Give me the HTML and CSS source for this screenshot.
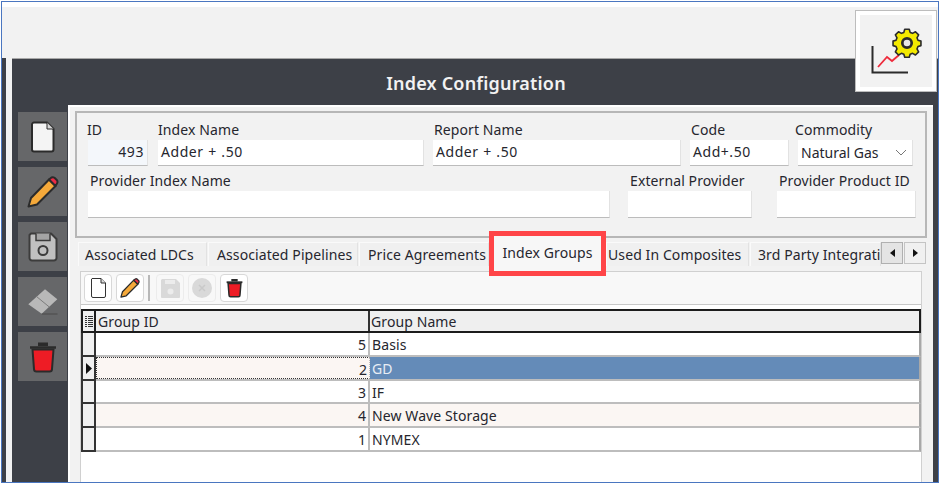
FILE: index.html
```html
<!DOCTYPE html>
<html lang="en">
<head>
<meta charset="utf-8">
<title>Index Configuration</title>
<link rel="stylesheet" href="styles.css">
</head>
<body>
<div class="window">
  <div class="topbar"></div>
  <div class="logo-tile">
    <svg width="60" height="52" viewBox="865 25 60 52">
      <path d="M872.500 46V72.500H908" fill="none" stroke="#2b2b2b" stroke-width="2"/>
      <path d="M878 67L887 57L892 61L899 55" fill="none" stroke="#ee2b3c" stroke-width="1.800"/>
      <g transform="translate(907 43) scale(.9) translate(-44.500 -16.800)">
        <path d="M42 1.500h5l1 3.500 2.700 1.100 3.200-1.800 3.500 3.500-1.800 3.200 1.100 2.700 3.300 1v5l-3.300 1-1.100 2.700 1.800 3.200-3.500 3.500-3.200-1.800-2.700 1.100-1 3.300h-5l-1-3.300-2.700-1.100-3.200 1.800-3.500-3.500 1.800-3.200-1.100-2.700-3.300-1v-5l3.300-1 1.100-2.700-1.800-3.200 3.500-3.500 3.200 1.800 2.700-1.100z" fill="#f4ea00" stroke="#2b2b2b" stroke-width="1.800" stroke-linejoin="round"/>
        <circle cx="44.500" cy="16.800" r="5.200" fill="#e8e8e8" stroke="#2b2b2b" stroke-width="3"/>
      </g>
    </svg>
  </div>
  <div class="main">
    <div class="sliver"></div>
    <div class="panel">
      <h1 class="title">Index Configuration</h1>
      <div class="body">
        <nav class="sidebar">
          <div class="side-btn">
            <svg width="24" height="32" viewBox="0 0 24 32"><path d="M3 1.500H16L22.500 8V28.500a2 2 0 0 1-2 2H3a2 2 0 0 1-2-2V3.500a2 2 0 0 1 2-2z" fill="#f4f4f4" stroke="#2b2b2b" stroke-width="2"/><path d="M16 1.500V8H22.500" fill="#d8d8d8" stroke="#2b2b2b" stroke-width="1"/></svg>
          </div>
          <div class="side-btn">
            <svg width="32" height="32" viewBox="0 0 32 32"><path d="M1.500 30.500L4 22L22 3.500L28.500 10L10 28.500z" fill="#f5a93a" stroke="#2b2b2b" stroke-width="2" stroke-linejoin="round"/><path d="M22 3.500L24.500 1.500Q26 .7 27.500 1.800L30 4.300Q31 6 30 7.500L28.500 10z" fill="#ee2b45" stroke="#2b2b2b" stroke-width="2" stroke-linejoin="round"/></svg>
          </div>
          <div class="side-btn">
            <svg width="30" height="30" viewBox="0 0 30 30"><path d="M3 1.500H23L28.500 7V26a2.500 2.500 0 0 1-2.500 2.500H4A2.500 2.500 0 0 1 1.500 26V3z" fill="#c0c0c0" stroke="#3c3c3c" stroke-width="2" stroke-linejoin="round"/><path d="M8 1.500V8.500H22V1.500" fill="#a4a4a4" stroke="#3c3c3c" stroke-width="1.500"/><circle cx="15" cy="18.500" r="4.500" fill="#c0c0c0" stroke="#3c3c3c" stroke-width="2"/></svg>
          </div>
          <div class="side-btn">
            <svg width="32" height="28" viewBox="27 287 32 28"><path d="M28.300 303.300L45 288.300L57.300 298.300L41.700 312.700z" fill="#b8b8b8"/><path d="M36.500 295.500L49.300 306" stroke="#7c7c7c" stroke-width="1"/><path d="M41.700 313H57.500" stroke="#4a4a4a" stroke-width="1"/></svg>
          </div>
          <div class="side-btn">
            <svg width="28" height="32" viewBox="0 0 28 32"><path d="M1 6.500H27" stroke="#2b2b2b" stroke-width="2.500"/><path d="M10 5V2.500H18V5" fill="#2b2b2b" stroke="#2b2b2b" stroke-width="2"/><path d="M3.500 8.500H24.500L23 28a2.500 2.500 0 0 1-2.500 2.500H7.500A2.500 2.500 0 0 1 5 28z" fill="#ee1c25" stroke="#2b2b2b" stroke-width="2"/></svg>
          </div>
        </nav>
        <section class="content">
          <div class="group">
            <div class="form-row">
              <div class="field f-id"><label class="lbl l-id">ID</label><div class="input num wide">493</div></div>
              <div class="field f-name"><label class="lbl l-name">Index Name</label><div class="input wide">Adder + .50</div></div>
              <div class="field f-report"><label class="lbl l-one">Report Name</label><div class="input wide">Adder + .50</div></div>
              <div class="field f-code"><label class="lbl l-one">Code</label><div class="input wide">Add+.50</div></div>
              <div class="field f-comm"><label class="lbl l-comm">Commodity</label><div class="input select">Natural Gas<svg width="12" height="7" viewBox="0 0 12 7"><path d="M1 1L6 6L11 1" fill="none" stroke="#777" stroke-width="1"/></svg></div></div>
            </div>
            <div class="form-row row2">
              <div class="field f-prov"><label class="lbl">Provider Index Name</label><div class="input tall"></div></div>
              <div class="field f-ext"><label class="lbl">External Provider</label><div class="input tall"></div></div>
              <div class="field f-prod"><label class="lbl">Provider Product ID</label><div class="input tall"></div></div>
            </div>
          </div>
          <div class="tabs">
            <div class="tab t1">Associated LDCs</div>
            <div class="tab t2">Associated Pipelines</div>
            <div class="tab t3">Price Agreements</div>
            <div class="tab active t4">Index Groups</div>
            <div class="tab t5">Used In Composites</div>
            <div class="tab t6">3rd Party Integrations</div>
            <div class="scroller">
              <div class="arrow pressed"><svg width="5" height="8" viewBox="0 0 5 8"><path d="M5 0V8L0 4z" fill="#111"/></svg></div>
              <div class="arrow"><svg width="5" height="8" viewBox="0 0 5 8"><path d="M0 0V8L5 4z" fill="#111"/></svg></div>
            </div>
          </div>
          <div class="tab-page">
            <div class="toolbar">
              <div class="tool">
                <svg width="15" height="20" viewBox="0 0 15 20"><path d="M1 .500H10L14.500 5V18a1.500 1.500 0 0 1-1.500 1.500H2A1.500 1.500 0 0 1 .500 18V1z" fill="#fff" stroke="#333"/><path d="M10 .500V5H14.500" fill="#ddd" stroke="#333"/></svg>
              </div>
              <div class="tool">
                <svg width="20" height="20" viewBox="0 0 32 32"><path d="M1.500 30.500L4 22L22 3.500L28.500 10L10 28.500z" fill="#f5a93a" stroke="#2b2b2b" stroke-width="2" stroke-linejoin="round"/><path d="M22 3.500L24.500 1.500Q26 .7 27.500 1.800L30 4.300Q31 6 30 7.500L28.500 10z" fill="#ee2b45" stroke="#2b2b2b" stroke-width="2" stroke-linejoin="round"/></svg>
              </div>
              <div class="tool-sep"></div>
              <div class="tool off">
                <svg width="19" height="19" viewBox="0 0 19 19"><path d="M1 0H15L19 4V18a1 1 0 0 1-1 1H1a1 1 0 0 1-1-1V1z" fill="#d9d9d9"/><circle cx="9.500" cy="12.500" r="3" fill="#ececec"/><rect x="4" y="1" width="10" height="4" fill="#ececec"/></svg>
              </div>
              <div class="tool off">
                <svg width="20" height="20" viewBox="0 0 20 20"><circle cx="10" cy="10" r="10" fill="#d9d9d9"/><path d="M7 7L13 13M13 7L7 13" stroke="#c9c9c9" stroke-width="1.500"/></svg>
              </div>
              <div class="tool">
                <svg width="17" height="20" viewBox="0 0 28 32"><path d="M1 6.500H27" stroke="#2b2b2b" stroke-width="3"/><path d="M10 5V2.500H18V5" fill="#2b2b2b" stroke="#2b2b2b" stroke-width="2.500"/><path d="M3.500 8.500H24.500L23 28a2.500 2.500 0 0 1-2.500 2.500H7.500A2.500 2.500 0 0 1 5 28z" fill="#ee1c25" stroke="#2b2b2b" stroke-width="2.500"/></svg>
              </div>
            </div>
            <div class="grid">
              <div class="grid-row head">
                <div class="rh"><svg width="8" height="11" viewBox="0 0 8 11"><path d="M0 .5H2M3 .5H8M0 2.500H2M3 2.500H8M0 4.500H2M3 4.500H8M0 6.500H2M3 6.500H8M0 8.500H2M3 8.500H8M0 10.500H2M3 10.500H8" stroke="#333" stroke-width="1"/></svg></div>
                <div class="c1">Group ID</div>
                <div class="c2">Group Name</div>
              </div>
              <div class="grid-row">
                <div class="rh"></div><div class="c1">5</div><div class="c2">Basis</div>
              </div>
              <div class="grid-row alt current">
                <div class="rh"><svg width="6" height="11" viewBox="0 0 6 11"><path d="M0 0V11L6 5.500z" fill="#111"/></svg></div><div class="c1">2</div><div class="c2 sel">GD</div>
              </div>
              <div class="grid-row short">
                <div class="rh"></div><div class="c1">3</div><div class="c2">IF</div>
              </div>
              <div class="grid-row alt">
                <div class="rh"></div><div class="c1">4</div><div class="c2">New Wave Storage</div>
              </div>
              <div class="grid-row">
                <div class="rh"></div><div class="c1">1</div><div class="c2">NYMEX</div>
              </div>
            </div>
          </div>
        </section>
      </div>
    </div>
  </div>
</div>
</body>
</html>
```

FILE: styles.css
```css
* { box-sizing: border-box; }
html, body { margin: 0; padding: 0; background: #fff; }
body {
  width: 940px;
  height: 484px;
  overflow: hidden;
  font-family: "Noto Sans", sans-serif;
  font-size: 14px;
  color: #26262e;
  padding: 1px 0 0 1px;
}
.window {
  position: relative;
  width: 938px;
  height: 482px;
  border: 1px solid #4a76c0;
  padding-top: 5px;
  display: flex;
  flex-direction: column;
  overflow: hidden;
}
.topbar {
  height: 51px;
  background: #f2f2f2;
  flex: none;
}
.logo-tile {
  position: absolute;
  left: 853px;
  top: 8px;
  width: 82px;
  height: 82px;
  background: #f2f2f2;
  border: 1px solid #bdbdbd;
  outline: 4px solid #fff;
  outline-offset: -5px;
  z-index: 2;
  padding: 14px 0 0 9px;
  display: flex;
  align-items: flex-start;
}
.main {
  flex: 1;
  display: flex;
  background: #f2f2f2;
  min-height: 0;
}
.sliver {
  width: 10px;
  flex: none;
  background: #f2f2f2;
  border-left: 4px solid #3d4047;
}
.panel {
  flex: 1;
  background: #3d4047;
  border-top: 1px solid #a8a8a8;
  display: flex;
  flex-direction: column;
  min-width: 0;
  padding-right: 5px;
}
.title {
  margin: 0;
  height: 46px;
  flex: none;
  text-align: center;
  color: #f2f2f2;
  font-size: 18px;
  font-weight: 600;
  line-height: 48px;
  padding-left: 7px;
  letter-spacing: .2px;
}
.body {
  flex: 1;
  display: flex;
  min-height: 0;
}
.sidebar {
  width: 56px;
  flex: none;
  padding: 7px 0 0 6px;
  display: flex;
  flex-direction: column;
  gap: 6px;
}
.side-btn {
  width: 49px;
  height: 49px;
  background: #666769;
  display: flex;
  align-items: center;
  justify-content: center;
}
.content {
  flex: 1;
  min-width: 0;
  background: #f2f2f2;
  border-top: 2px solid #fff;
  border-left: 2px solid #fff;
  padding: 4px 6px 0 5px;
}
.group {
  height: 127px;
  border: 2px solid #b7b7b7;
  padding: 8px 0 0 11px;
}
.form-row { display: flex; }
.row2 { margin-top: 6px; }
.field { display: flex; flex-direction: column; flex: none; }
.lbl { height: 19px; line-height: 18px; white-space: nowrap; padding-left: 2px; letter-spacing: .1px; }
.input {
  height: 26px;
  background: #fff;
  border-bottom: 1px solid #bcbcbc;
  border-right: 1px solid #e2e2e2;
  line-height: 24px;
  padding-left: 3px;
  white-space: nowrap;
}
.wide { letter-spacing: .55px; word-spacing: .4px; }
.tall { height: 27px; }
.num { text-align: right; padding-right: 3px; background: #f4f7fb; }
.select { display: flex; align-items: center; justify-content: space-between; padding-right: 5px; }
.l-id { margin-left: -3px; }
.l-name { padding-left: 0; }
.l-one { padding-left: 1px; }
.l-comm { margin-left: -3px; padding-left: 0; }
.f-id { width: 60px; }
.f-name { width: 266px; margin-left: 10px; }
.f-report { width: 248px; margin-left: 9px; }
.f-code { width: 99px; margin-left: 9px; }
.f-comm { width: 115px; margin-left: 9px; }
.f-prov { width: 522px; }
.f-ext { width: 124px; margin-left: 18px; }
.f-prod { width: 139px; margin-left: 25px; }
.tabs {
  display: flex;
  height: 24px;
  margin-top: 4px;
  margin-left: 3px;
}
.tab {
  flex: none;
  height: 24px;
  background: #f0f0f0;
  border-top: 1px solid #fafafa;
  border-left: 1px solid #fafafa;
  border-right: 1px solid #e2e2e2;
  line-height: 24px;
  white-space: nowrap;
  overflow: hidden;
  margin-right: 1px;
  letter-spacing: .1px;
}
.t1 { width: 129px; padding-left: 6px; }
.t2 { width: 150px; padding-left: 8px; }
.t3 { width: 130px; padding-left: 8px; margin-right: 0; }
.t5 { width: 143px; padding-left: 1px; }
.t6 { width: 131px; padding-left: 7px; margin-right: 0; }
.tab.active {
  width: 107px;
  height: 35px;
  margin: -6px 5px 0;
  background: #f7f7f7;
  line-height: 34px;
  text-align: center;
  outline: 5px solid #ff4548;
  border: 0;
  z-index: 1;
  position: relative;
}
.scroller { display: flex; }
.arrow {
  width: 22px;
  height: 22px;
  background: #f0f0f0;
  border: 1px solid #c4c4c4;
  display: flex;
  align-items: center;
  justify-content: center;
  margin-right: 1px;
}
.pressed { background: #e4e4e4; border-color: #b0b0b0; }
.tab-page {
  margin: 5px 5px 0 5px;
  background: #fff;
  border: 1px solid #d0d0d0;
  border-bottom: 0;
  height: 220px;
}
.toolbar {
  height: 33px;
  background: #f8f8f8;
  border-bottom: 1px solid #c8c8c8;
  display: flex;
  align-items: center;
  padding-left: 3px;
  gap: 4px;
}
.tool {
  width: 28px;
  height: 28px;
  background: #fff;
  border: 1px solid #d8d8d8;
  border-radius: 4px;
  display: flex;
  align-items: center;
  justify-content: center;
}
.tool.off { background: #f8f8f8; border-color: #ececec; }
.tool-sep { width: 2px; height: 26px; background: #b8b8b8; margin-right: 2px; }
.grid { margin-top: 4px; }
.grid-row {
  display: flex;
  height: 24px;
  background: #fff;
  border-bottom: 2px solid #bdbdbd;
  border-right: 2px solid #a8a8a8;
  line-height: 23px;
  letter-spacing: .1px;
}
.short { height: 23px; }
.alt { background: #fbf6f3; }
.rh {
  width: 15px;
  flex: none;
  margin-bottom: -2px;
  background: #f0f0f0;
  border: 2px solid #333;
  border-top: 0;
  display: flex;
  align-items: center;
  justify-content: center;
}
.c1 {
  width: 274px;
  flex: none;
  text-align: right;
  padding-right: 2px;
  border-right: 2px solid #bdbdbd;
}
.c2 { flex: 1; padding-left: 2px; }
.sel { background: #648bb8; color: #e8eef5; }
.current .c1 {
  border: 1px dotted #333;
  border-right-color: #bdbdbd;
}
.head {
  background: #efefef;
  border: 2px solid #1c1c1c;
  border-left: 0;
  line-height: 22px;
}
.head .rh { margin: 0; border-bottom: 0; border-color: #1c1c1c; background: #efefef; }
.head .c1 { text-align: left; padding-left: 2px; border-right: 2px solid #333; }
.head .c2 { padding-left: 1px; }
```
